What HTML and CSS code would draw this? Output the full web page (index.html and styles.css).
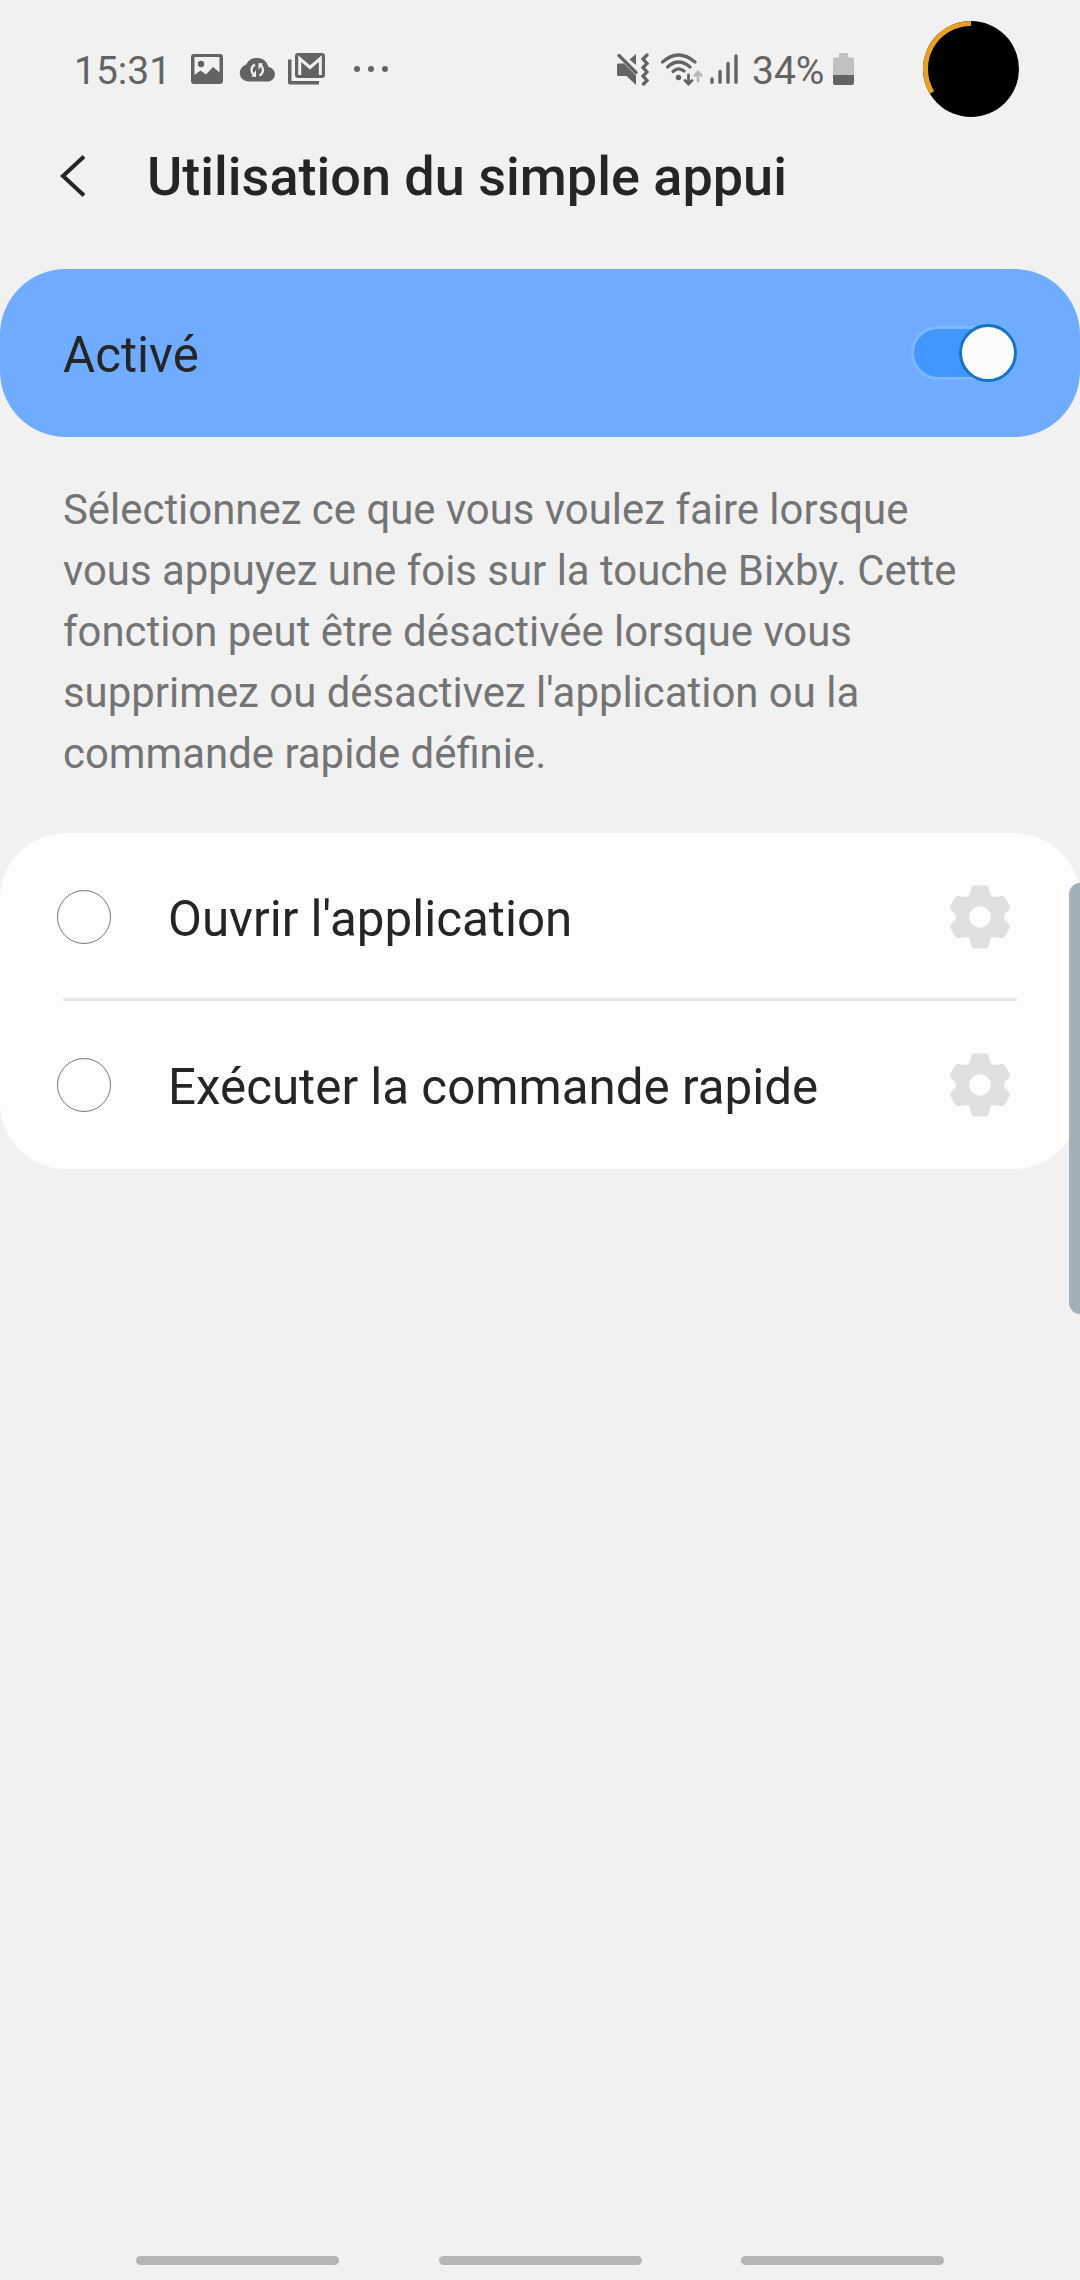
FILE: index.html
```html
<!DOCTYPE html>
<html lang="fr">
<head>
<meta charset="UTF-8">
<title>Utilisation du simple appui</title>
<link rel="stylesheet" href="styles.css">
</head>
<body>

<div class="status-bar">
<span class="clock">15:31</span>
<svg class="icon-image" width="32" height="30" viewBox="0 0 32 30"><path fill-rule="evenodd" d="M3 0H29Q32 0 32 3V27Q32 30 29 30H3Q0 30 0 27V3Q0 0 3 0ZM3.500 3V21L9.500 16.500L15 20.500L22 13L28.500 18.500V3Z"/><circle cx="10" cy="10" r="3.200"/></svg>
<svg class="icon-cloud" width="37" height="25" viewBox="0 0 37 25"><path d="M9 24.500A8.500 8.500 0 0 1 7 7.800A12 12 0 0 1 29.500 10A7.300 7.300 0 0 1 29.500 24.500Z"/><path class="knock" d="M16 7.500Q12.500 9.500 12.500 13Q12.500 16 15 18M20.500 18.500Q24 16.500 24 13Q24 10 21.500 8"/><path class="knock-fill" d="M17 13V20L12.500 19.500ZM19.500 6V13L24 6.500Z"/></svg>
<svg class="icon-mail" width="37" height="32" viewBox="0 0 37 32"><path fill-rule="evenodd" d="M10 0H34Q37 0 37 3V22Q37 25 34 25H10Q7 25 7 22V3Q7 0 10 0Z"/><path class="knock-mail" d="M11.700 22V5.500L22 14.500L32.300 5.500V22"/><path d="M0 6.500H3.500V28H31V31.500H2Q0 31.500 0 29.500Z"/></svg>
<svg class="icon-more" width="36" height="8" viewBox="0 0 36 8"><circle cx="4" cy="4" r="3"/><circle cx="18" cy="4" r="3"/><circle cx="32" cy="4" r="3"/></svg>

<svg class="icon-mute" width="32" height="33" viewBox="0 0 32 33"><path d="M0 12Q0 10.500 1.500 10.500H7L19 22.500V32L9.500 23H1.500Q0 23 0 21.500ZM19 1V12L12.500 6.500Z"/><path class="line" d="M2 2.500L19 19.500"/><path class="line" d="M30 2L26 6L30 10.500L26 14.500L30 19L26 23L30 27.500L26.500 31"/></svg>
<svg class="icon-wifi" width="42" height="33" viewBox="0 0 42 33"><g class="line"><path d="M1.500 9Q17.500 -5 34 9"/><path d="M6.500 14Q17.500 4 29 14"/><path d="M12 18.500Q17.500 13.500 23 18"/><path class="arrow" d="M27.500 22V30M24 27.500L27.500 31L31 27.500"/><path class="arrow upload" d="M37 28V19.500M33.700 22.500L37 19L40.300 22.500"/></g><circle cx="17.500" cy="24.500" r="2.700"/></svg>
<svg class="icon-signal" width="28" height="30" viewBox="0 0 28 30"><path class="bars" d="M2 25V28.200M10 17.500V28.200M18 9.500V28.200M26 2V28.200"/></svg>
<span class="percent">34%</span>
<svg class="icon-battery" width="21" height="32" viewBox="0 0 21 32"><path class="empty" d="M7 0H14Q15 0 15 1V4.500H19Q21 4.500 21 6.500V22H0V6.500Q0 4.500 2 4.500H6V1Q6 0 7 0Z"/><path d="M0 22H21V30Q21 32 19 32H2Q0 32 0 30Z"/></svg>
<svg class="camera" width="96" height="96" viewBox="0 0 96 96"><circle class="hole" cx="48" cy="48" r="48"/><path class="ring" d="M48 2.500A45.500 45.500 0 0 0 9 71.500"/></svg>
</div>

<div class="header">
<svg class="back" width="26" height="42" viewBox="0 0 26 42"><path d="M24 1.500L3 21L24 40.500"/></svg>
<h1>Utilisation du simple appui</h1>
</div>

<div class="switch-bar">
<span class="state">Activé</span>
<div class="switch"><div class="thumb"></div></div>
</div>

<p class="description">Sélectionnez ce que vous voulez faire lorsque<br>vous appuyez une fois sur la touche Bixby. Cette<br>fonction peut être désactivée lorsque vous<br>supprimez ou désactivez l'application ou la<br>commande rapide définie.</p>

<div class="options">
<div class="option">
<span class="radio"></span>
<span class="label">Ouvrir l'application</span>
<svg class="gear" width="62" height="64" viewBox="-31 -32 62 64"><path fill-rule="evenodd" d="M-6 -31.500H6Q8 -31.500 8.500 -29.500L10.500 -22Q12 -20 14 -20L22 -21Q24 -21 25 -19.500L30 -10.500Q30.500 -9 29.500 -8L24.500 -3Q23.500 0 24.500 3L29.500 8Q30.500 9 30 10.500L25 19.500Q24 21 22 21L14 20Q12 20 10.500 22L8.500 29.500Q8 31.500 6 31.500H-6Q-8 31.500 -8.500 29.500L-10.500 22Q-12 20 -14 20L-22 21Q-24 21 -25 19.500L-30 10.500Q-30.500 9 -29.500 8L-24.500 3Q-23.500 0 -24.500 -3L-29.500 -8Q-30.500 -9 -30 -10.500L-25 -19.500Q-24 -21 -22 -21L-14 -20Q-12 -20 -10.500 -22L-8.500 -29.500Q-8 -31.500 -6 -31.500ZM0 -10.700A10.700 10.700 0 1 0 0 10.700A10.700 10.700 0 1 0 0 -10.700Z"/></svg>
</div>
<div class="divider"></div>
<div class="option">
<span class="radio"></span>
<span class="label">Exécuter la commande rapide</span>
<svg class="gear" width="62" height="64" viewBox="-31 -32 62 64"><path fill-rule="evenodd" d="M-6 -31.500H6Q8 -31.500 8.500 -29.500L10.500 -22Q12 -20 14 -20L22 -21Q24 -21 25 -19.500L30 -10.500Q30.500 -9 29.500 -8L24.500 -3Q23.500 0 24.500 3L29.500 8Q30.500 9 30 10.500L25 19.500Q24 21 22 21L14 20Q12 20 10.500 22L8.500 29.500Q8 31.500 6 31.500H-6Q-8 31.500 -8.500 29.500L-10.500 22Q-12 20 -14 20L-22 21Q-24 21 -25 19.500L-30 10.500Q-30.500 9 -29.500 8L-24.500 3Q-23.500 0 -24.500 -3L-29.500 -8Q-30.500 -9 -30 -10.500L-25 -19.500Q-24 -21 -22 -21L-14 -20Q-12 -20 -10.500 -22L-8.500 -29.500Q-8 -31.500 -6 -31.500ZM0 -10.700A10.700 10.700 0 1 0 0 10.700A10.700 10.700 0 1 0 0 -10.700Z"/></svg>
</div>
</div>

<div class="edge-handle"></div>

<div class="nav-bar">
<span></span>
<span></span>
<span></span>
</div>

</body>
</html>
```
FILE: styles.css
```css
* { box-sizing: border-box; }
body {
    margin: 0;
    width: 1080px;
    height: 2280px;
    display: flex;
    flex-direction: column;
    position: relative;
    overflow: hidden;
    background: #f1f1f1;
    color: #252525;
    font-family: Roboto, sans-serif;
}
svg { display: block; flex: none; }

/* status bar */
.status-bar {
    height: 138px;
    display: flex;
    align-items: center;
    padding-left: 74px;
    color: #636363;
    fill: #636363;
    font-size: 39px;
    white-space: nowrap;
}
.clock { width: 117px; padding-top: 3px; }
.icon-image { margin-right: 16px; }
.icon-cloud { margin-right: 12px; }
.icon-mail { margin-right: 28px; }
.icon-more { margin-right: 228px; }
.icon-mute { margin-right: 12px; }
.icon-wifi { margin-right: 7px; }
.icon-signal { margin-right: 14px; }
.percent { width: 81px; padding-top: 3px; }
.icon-battery { margin-right: 69px; }
.knock { fill: none; stroke: #f1f1f1; stroke-width: 2.2; }
.knock-fill { fill: #f1f1f1; }
.knock-mail { fill: none; stroke: #f1f1f1; stroke-width: 3; }
.line {
    fill: none;
    stroke: #636363;
    stroke-width: 3.2;
    stroke-linecap: round;
}
.arrow { stroke-width: 2.8; }
.upload { stroke: #b8b8b8; }
.bars { stroke: #636363; stroke-width: 3.4; stroke-linecap: round; }
.empty { fill: #c1c1c1; }
.hole { fill: #000; }
.ring { fill: none; stroke: #e6a023; stroke-width: 5; }

/* title */
.header {
    height: 131px;
    display: flex;
    align-items: flex-start;
    padding: 17px 0 0 60px;
}
.back { margin-right: 61px; }
.back path { fill: none; stroke: #252525; stroke-width: 4; }
h1 {
    margin: 0;
    font-size: 54px;
    font-weight: 500;
    line-height: 44px;
    white-space: nowrap;
}

.switch-bar {
    height: 168px;
    border-radius: 66px;
    background: #6facff;
    display: flex;
    align-items: center;
    justify-content: space-between;
    padding: 0 63px;
    font-size: 49.3px;
}
.state { padding-top: 3px; }
.switch {
    width: 106px;
    height: 54px;
    border: 3px solid #7db8ff;
    border-radius: 27px;
    background: #4296ff;
    display: flex;
    align-items: center;
    justify-content: flex-end;
}
.thumb {
    flex: none;
    width: 58px;
    height: 58px;
    margin-right: -3px;
    border: 3px solid #1474c5;
    border-radius: 50%;
    background: #fcfcfc;
}

.description {
    margin: 0;
    height: 396px;
    padding: 42px 63px 0;
    color: #747474;
    font-size: 41.9px;
    line-height: 61px;
    white-space: nowrap;
}

/* list */
.options {
    height: 336px;
    border-radius: 66px;
    background: #fdfdfd;
}
.option {
    height: 165px;
    display: flex;
    align-items: center;
    padding: 3px 69px 0 57px;
    font-size: 49.3px;
}
.divider + .option {
    height: 168px;
    padding-top: 0;
}
.radio {
    width: 54px;
    height: 54px;
    border: 1px solid #777;
    border-radius: 50%;
}
.label { flex: 1; padding: 3px 0 0 57px; }
.gear { fill: #e0e0e0; }
.divider {
    height: 3px;
    margin: 0 63px;
    background: #e8e8e8;
}

.edge-handle {
    position: absolute;
    top: 883px;
    right: 0;
    width: 11px;
    height: 431px;
    border-radius: 14px 0 0 14px;
    border-left: 2px solid #a8b2b5;
    background: #a1b0b8;
}

.nav-bar {
    margin-top: auto;
    display: flex;
    justify-content: center;
    gap: 99.5px;
    padding-bottom: 15px;
}
.nav-bar span {
    width: 203px;
    height: 9px;
    border-radius: 5px;
    background: #b5b5b5;
}
```
